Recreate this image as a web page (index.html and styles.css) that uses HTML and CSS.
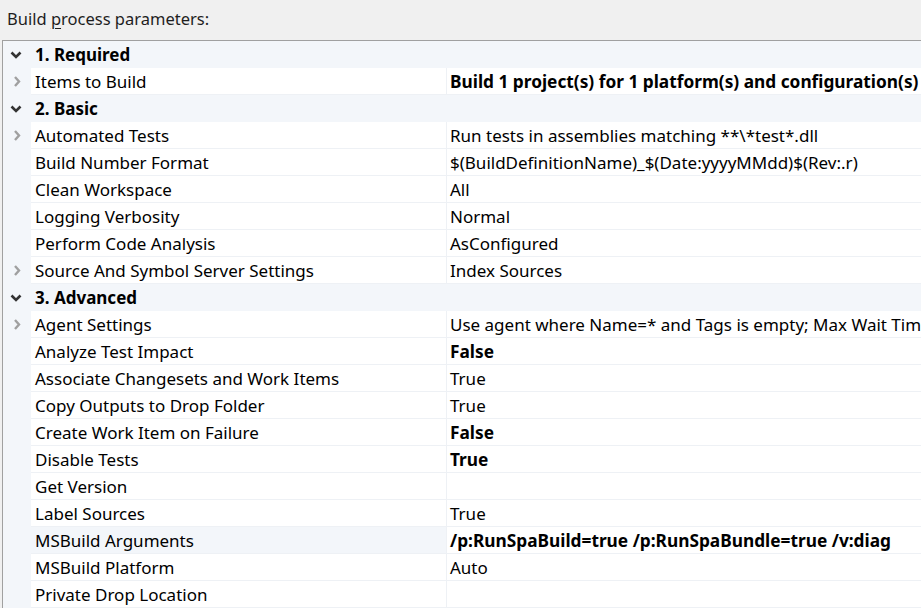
FILE: index.html
```html
<!DOCTYPE html>
<html>
<head>
<meta charset="utf-8">
<link rel="stylesheet" href="styles.css">
</head>
<body>
<div class="caption">Build <u>p</u>rocess parameters:</div>
<div class="grid">
  <div class="row section"><span class="gut"><svg class="down" viewBox="0 0 12 8"><path d="M1.5 1.5 L6 6 L10.5 1.5"/></svg></span><span class="title">1. Required</span></div>
  <div class="row"><span class="gut"><svg class="right" viewBox="0 0 8 12"><path d="M2 1.5 L6 6 L2 10.5"/></svg></span><span class="name">Items to Build</span><span class="val b">Build 1 project(s) for 1 platform(s) and configuration(s)</span></div>
  <div class="row section"><span class="gut"><svg class="down" viewBox="0 0 12 8"><path d="M1.5 1.5 L6 6 L10.5 1.5"/></svg></span><span class="title">2. Basic</span></div>
  <div class="row"><span class="gut"><svg class="right" viewBox="0 0 8 12"><path d="M2 1.5 L6 6 L2 10.5"/></svg></span><span class="name">Automated Tests</span><span class="val">Run tests in assemblies matching **\*test*.dll</span></div>
  <div class="row"><span class="gut"></span><span class="name">Build Number Format</span><span class="val">$(BuildDefinitionName)_$(Date:yyyyMMdd)$(Rev:.r)</span></div>
  <div class="row"><span class="gut"></span><span class="name">Clean Workspace</span><span class="val">All</span></div>
  <div class="row"><span class="gut"></span><span class="name">Logging Verbosity</span><span class="val">Normal</span></div>
  <div class="row"><span class="gut"></span><span class="name">Perform Code Analysis</span><span class="val">AsConfigured</span></div>
  <div class="row"><span class="gut"><svg class="right" viewBox="0 0 8 12"><path d="M2 1.5 L6 6 L2 10.5"/></svg></span><span class="name">Source And Symbol Server Settings</span><span class="val">Index Sources</span></div>
  <div class="row section"><span class="gut"><svg class="down" viewBox="0 0 12 8"><path d="M1.5 1.5 L6 6 L10.5 1.5"/></svg></span><span class="title">3. Advanced</span></div>
  <div class="row"><span class="gut"><svg class="right" viewBox="0 0 8 12"><path d="M2 1.5 L6 6 L2 10.5"/></svg></span><span class="name">Agent Settings</span><span class="val">Use agent where Name=* and Tags is empty; Max Wait Time: Infinite</span></div>
  <div class="row"><span class="gut"></span><span class="name">Analyze Test Impact</span><span class="val b">False</span></div>
  <div class="row"><span class="gut"></span><span class="name">Associate Changesets and Work Items</span><span class="val">True</span></div>
  <div class="row"><span class="gut"></span><span class="name">Copy Outputs to Drop Folder</span><span class="val">True</span></div>
  <div class="row"><span class="gut"></span><span class="name">Create Work Item on Failure</span><span class="val b">False</span></div>
  <div class="row"><span class="gut"></span><span class="name">Disable Tests</span><span class="val b">True</span></div>
  <div class="row"><span class="gut"></span><span class="name">Get Version</span><span class="val"></span></div>
  <div class="row"><span class="gut"></span><span class="name">Label Sources</span><span class="val">True</span></div>
  <div class="row hl"><span class="gut"></span><span class="name">MSBuild Arguments</span><span class="val b">/p:RunSpaBuild=true /p:RunSpaBundle=true /v:diag</span></div>
  <div class="row"><span class="gut"></span><span class="name">MSBuild Platform</span><span class="val">Auto</span></div>
  <div class="row"><span class="gut"></span><span class="name">Private Drop Location</span><span class="val"></span></div>
</div>
</body>
</html>
```
FILE: styles.css
```css
html, body {
  margin: 0;
  padding: 0;
  background: #f0f0f0;
  overflow: hidden;
}
body {
  font-family: "Noto Sans", "Open Sans", sans-serif;
  font-size: 17px;
  color: #000;
  width: 921px;
  height: 608px;
}
.caption {
  height: 40px;
  line-height: 38px;
  padding-left: 7px;
  font-size: 16.5px;
  color: #1e1e1e;
}
.caption u {
  text-decoration-thickness: 1px;
  text-underline-offset: 3px;
}
.grid {
  margin-left: 2px;
  border-top: 1px solid #a0a0a0;
  border-left: 1px solid #a0a0a0;
  background: #f3f6fa;
  display: flex;
  flex-direction: column;
  height: 567px;
  overflow: hidden;
}
.row {
  display: flex;
  height: 27px;
  flex: none;
  align-items: stretch;
  white-space: nowrap;
}
.gut {
  width: 28px;
  flex: none;
  display: flex;
  align-items: center;
  justify-content: center;
}
.down {
  width: 12px;
  height: 8px;
  margin-left: -2px;
  fill: none;
  stroke: #333;
  stroke-width: 2.6;
}
.right {
  width: 8px;
  height: 13px;
  fill: none;
  stroke: #a0a0a0;
  stroke-width: 2.4;
}
.title {
  font-weight: bold;
  padding-left: 4px;
  line-height: 28px;
}
.name {
  width: 411px;
  flex: none;
  background: #fff;
  padding-left: 4px;
  border-bottom: 1px solid #eef1f5;
  line-height: 27px;
  overflow: hidden;
}
.val {
  flex: 1;
  background: #fff;
  padding-left: 3px;
  border-left: 1px solid #eef1f5;
  border-bottom: 1px solid #eef1f5;
  line-height: 27px;
  overflow: hidden;
}
.b {
  font-weight: bold;
}
.val.b {
  font-size: 17.3px;
}
.hl .name {
  background: #f3f6fa;
}
```
